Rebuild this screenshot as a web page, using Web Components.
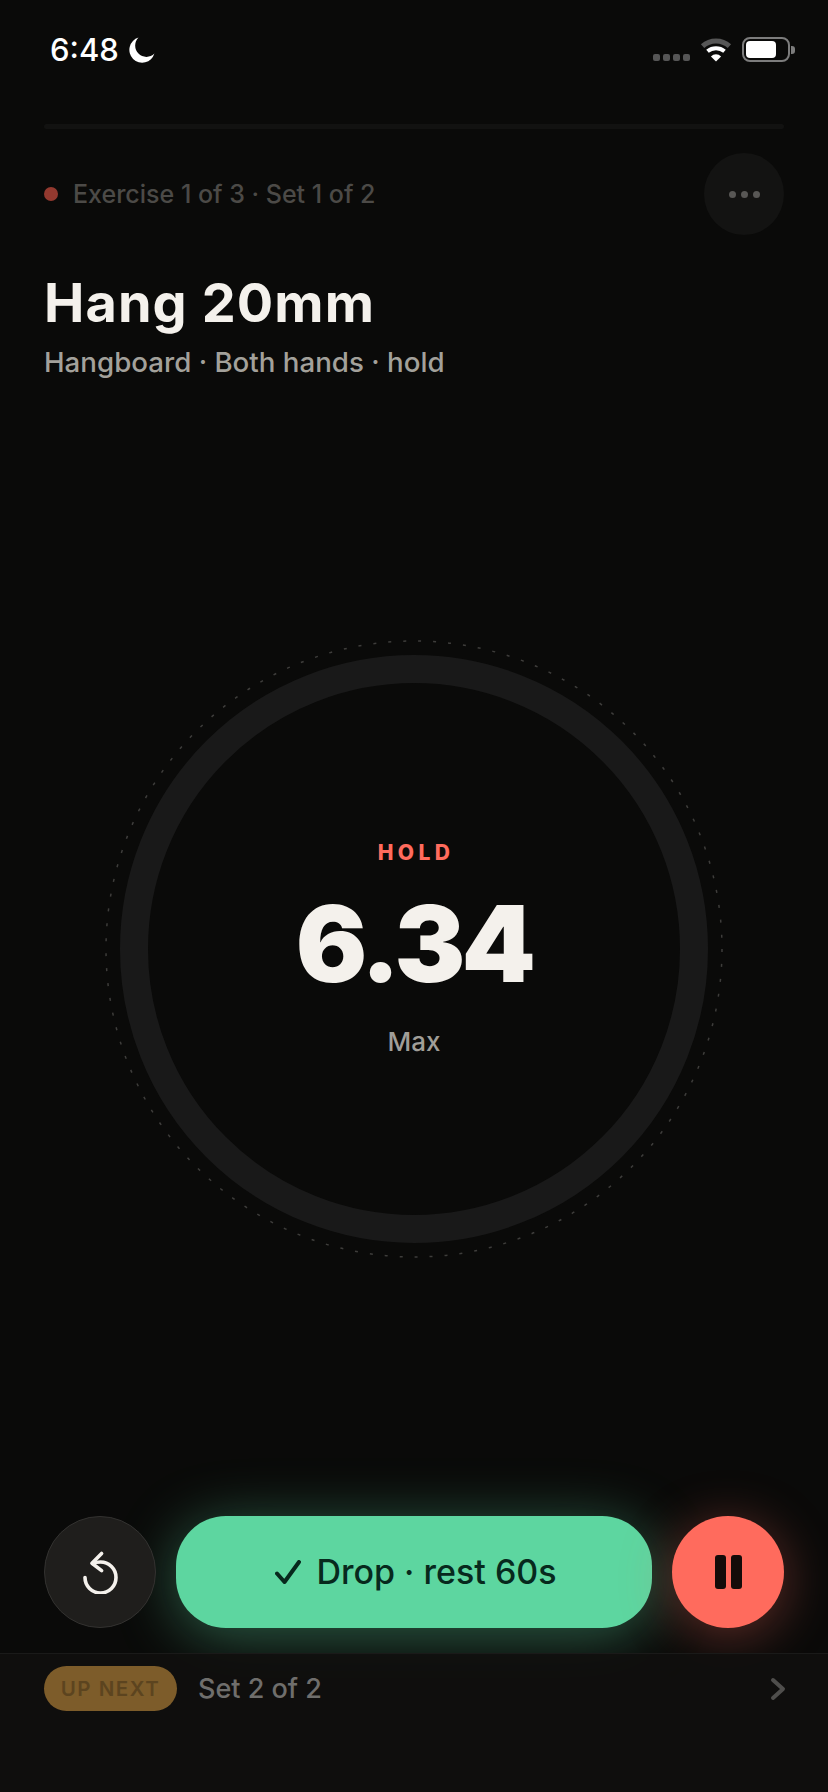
<!doctype html>
<html>
<head>
<meta charset="utf-8">
<title>Hang 20mm</title>
<style>
  html, body { margin: 0; background: #0a0a09; }
  body { font-family: Inter, "Liberation Sans", sans-serif; color: #f4f1ec; }
  workout-screen { height: 1792px; }
</style>
</head>
<body>
<workout-screen>
  <status-bar time="6:48"></status-bar>
  <progress-track></progress-track>
  <session-header title-text="Hang 20mm" sub="Hangboard · Both hands · hold">Exercise 1 of 3 · Set 1 of 2</session-header>
  <timer-dial phase="HOLD" value="6.34" note="Max"></timer-dial>
  <action-bar label="Drop · rest 60s"></action-bar>
  <up-next badge="UP NEXT">Set 2 of 2</up-next>
</workout-screen>

<script>
// Pantalla de entrenamiento
class WorkoutScreen extends HTMLElement {
  constructor() {
    super();
    this.attachShadow({ mode: "open" });
    this.shadowRoot.innerHTML = `
      <style>
        :host { display: flex; flex-direction: column; width: 828px; overflow: hidden; background: #0a0a09; }
      </style>
      <slot></slot>
    `;
  }
}

class StatusBar extends HTMLElement {
  constructor() {
    super();
    this.attachShadow({ mode: "open" });
    this.shadowRoot.innerHTML = `
      <style>
        :host { display: flex; justify-content: space-between; align-items: flex-start; height: 124px; box-sizing: border-box; padding: 32px 33px 0 50px; }
        .left { display: flex; align-items: center; gap: 10px; font: 500 31px/36px Inter, sans-serif; color: #fff; }
        .right { display: flex; align-items: flex-start; padding-top: 5px; }
        .signal { display: flex; gap: 3px; margin: 17px 10px 0 0; }
        .signal i { width: 7px; height: 7px; border-radius: 2px; background: #565656; }
        .batt { display: flex; align-items: center; margin-left: 10px; }
        .shell { width: 48px; height: 25px; box-sizing: border-box; border: 2px solid #7c7c7c; border-radius: 8px; padding: 2px; }
        .fill { width: 30px; height: 17px; border-radius: 4px; background: #fff; }
        .nub { width: 4px; height: 8px; border-radius: 0 3px 3px 0; background: #7c7c7c; margin-left: 1px; }
        svg { display: block; }
      </style>
      <div class="left">
        <span class="time"></span>
        <svg width="26" height="26" viewBox="0 0 26 26"><path fill="#fff" d="M9.5 0.6A12.8 12.8 0 1 0 25.4 16.6 10.6 10.6 0 0 1 9.5 0.6Z"/></svg>
      </div>
      <div class="right">
        <div class="signal"><i></i><i></i><i></i><i></i></div>
        <svg width="32" height="25" viewBox="0 0 32 25">
          <path d="M2.6 9.1A20 20 0 0 1 29.4 9.1" fill="none" stroke="#565656" stroke-width="5"/>
          <path d="M7.5 14.3A13.5 13.5 0 0 1 24.5 14.3" fill="none" stroke="#fff" stroke-width="4"/>
          <path d="M16 24.6L10.9 19.4A7.4 7.4 0 0 1 21.1 19.4Z" fill="#fff"/>
        </svg>
        <div class="batt"><div class="shell"><div class="fill"></div></div><div class="nub"></div></div>
      </div>
    `;
  }
  connectedCallback() {
    this.shadowRoot.querySelector(".time").textContent = this.getAttribute("time");
  }
}

class ProgressTrack extends HTMLElement {
  constructor() {
    super();
    this.attachShadow({ mode: "open" });
    this.shadowRoot.innerHTML = `
      <style>
        :host { display: block; height: 5px; margin: 0 44px; border-radius: 3px; background: #121211; }
      </style>
    `;
  }
}

class SessionHeader extends HTMLElement {
  constructor() {
    super();
    this.attachShadow({ mode: "open" });
    this.shadowRoot.innerHTML = `
      <style>
        :host { display: block; padding: 24px 44px 0; }
        .top { display: flex; align-items: center; gap: 15px; }
        .dot { width: 14px; height: 14px; border-radius: 50%; background: #93392f; }
        .crumb { flex: 1; font: 500 25px/30px Inter, sans-serif; color: #4c4a47; }
        .more { width: 80px; height: 82px; border-radius: 50%; background: #131312; display: flex; align-items: center; justify-content: center; gap: 5px; }
        .more i { width: 7px; height: 7px; border-radius: 50%; background: #585755; }
        h1 { margin: 36px 0 0; font: 700 54px/64px Inter, sans-serif; letter-spacing: 1.1px; color: #f4f1ec; }
        p { margin: 10px 0 0; font: 500 27.7px/34px Inter, sans-serif; color: #a3a19b; }
      </style>
      <div class="top">
        <span class="dot"></span>
        <span class="crumb"><slot></slot></span>
        <span class="more"><i></i><i></i><i></i></span>
      </div>
      <h1></h1>
      <p></p>
    `;
  }
  connectedCallback() {
    this.shadowRoot.querySelector("h1").textContent = this.getAttribute("title-text");
    this.shadowRoot.querySelector("p").textContent = this.getAttribute("sub");
  }
}

class TimerDial extends HTMLElement {
  constructor() {
    super();
    this.attachShadow({ mode: "open" });
    this.shadowRoot.innerHTML = `
      <style>
        :host { display: flex; flex: 1; align-items: center; justify-content: center; padding-top: 2px; }
        .dial { display: grid; place-items: center; width: 620px; height: 620px; }
        svg, .center { grid-area: 1 / 1; }
        .center { display: flex; flex-direction: column; align-items: center; }
        .phase { font: 800 21px/26px Inter, sans-serif; letter-spacing: 4.4px; margin-right: -4px; color: #ff6b5d; }
        .value { margin-top: 23px; font: 900 106px/110px Inter, sans-serif; letter-spacing: -3.8px; color: #f4f1ec; }
        .note { margin-top: 27px; font: 500 26px/32px Inter, sans-serif; color: #a09e98; }
      </style>
      <div class="dial">
        <svg width="620" height="620" viewBox="0 0 620 620">
          <circle cx="310" cy="310" r="308" fill="none" stroke="#3e3d3b" stroke-width="1.5" stroke-dasharray="3 12"/>
          <circle cx="310" cy="310" r="280" fill="none" stroke="#191919" stroke-width="28"/>
        </svg>
        <div class="center">
          <div class="phase"></div>
          <div class="value"></div>
          <div class="note"></div>
        </div>
      </div>
    `;
  }
  connectedCallback() {
    this.shadowRoot.querySelector(".phase").textContent = this.getAttribute("phase");
    this.shadowRoot.querySelector(".value").textContent = this.getAttribute("value");
    this.shadowRoot.querySelector(".note").textContent = this.getAttribute("note");
  }
}

class ActionBar extends HTMLElement {
  constructor() {
    super();
    this.attachShadow({ mode: "open" });
    this.shadowRoot.innerHTML = `
      <style>
        :host { display: flex; gap: 20px; padding: 0 44px 25px; height: 112px; }
        .round { flex: 0 0 112px; height: 112px; box-sizing: border-box; border-radius: 50%; display: flex; align-items: center; justify-content: center; }
        .redo { background: #1f1e1c; border: 1px solid #333230; position: relative; z-index: 1; }
        .pause { background: #ff6b5d; gap: 5px; box-shadow: 0 8px 52px rgba(255, 107, 93, .36); position: relative; }
        .pause i { width: 11px; height: 34px; border-radius: 3px; background: #140b09; }
        .drop { flex: 1; height: 112px; box-sizing: border-box; padding-left: 4px; border-radius: 50px; background: #5dd6a0; box-shadow: 0 8px 60px rgba(93, 214, 160, .42); display: flex; align-items: center; justify-content: center; gap: 15px; font: 500 34px/40px Inter, sans-serif; color: #07291d; }
        svg { display: block; }
      </style>
      <div class="round redo">
        <svg width="44" height="44" viewBox="0 0 44 44" fill="none" stroke="#f4f1ec" stroke-width="3.6" stroke-linecap="round" stroke-linejoin="round">
          <path d="M23.6 3.5L14 13.3L23.6 20.6"/>
          <path d="M14.5 13.5C17 12.4 19.6 12 22.5 12A15.5 15.5 0 1 1 7 27.5"/>
        </svg>
      </div>
      <div class="drop">
        <svg width="26" height="24" viewBox="0 0 26 24" fill="none" stroke="#07291d" stroke-width="4" stroke-linecap="round" stroke-linejoin="round"><path d="M2 13.5L9.5 22L24 2"/></svg>
        <span class="label"></span>
      </div>
      <div class="round pause"><i></i><i></i></div>
    `;
  }
  connectedCallback() {
    this.shadowRoot.querySelector(".label").textContent = this.getAttribute("label");
  }
}

class UpNext extends HTMLElement {
  constructor() {
    super();
    this.attachShadow({ mode: "open" });
    this.shadowRoot.innerHTML = `
      <style>
        :host { display: flex; align-items: flex-start; position: relative; height: 139px; box-sizing: border-box; padding: 12px 44px 0; border-top: 1px solid #1a1a19; background: rgba(16, 15, 14, .88); gap: 21px; }
        .badge { width: 133px; height: 45px; border-radius: 23px; background: #7d5c2a; display: flex; align-items: center; justify-content: center; font: 600 20.5px/26px Inter, sans-serif; letter-spacing: 1.5px; color: #5c441f; }
        .text { flex: 1; font: 500 27px/45px Inter, sans-serif; color: #6f6e6c; }
        svg { margin: 11px -2px 0 0; display: block; }
      </style>
      <span class="badge"></span>
      <span class="text"><slot></slot></span>
      <svg width="16" height="24" viewBox="0 0 16 24" fill="none" stroke="#4f4e4c" stroke-width="4" stroke-linecap="round" stroke-linejoin="round"><path d="M3 3L13 12L3 21"/></svg>
    `;
  }
  connectedCallback() {
    this.shadowRoot.querySelector(".badge").textContent = this.getAttribute("badge");
  }
}

customElements.define("workout-screen", WorkoutScreen);
customElements.define("status-bar", StatusBar);
customElements.define("progress-track", ProgressTrack);
customElements.define("session-header", SessionHeader);
customElements.define("timer-dial", TimerDial);
customElements.define("action-bar", ActionBar);
customElements.define("up-next", UpNext);
</script>
</body>
</html>
